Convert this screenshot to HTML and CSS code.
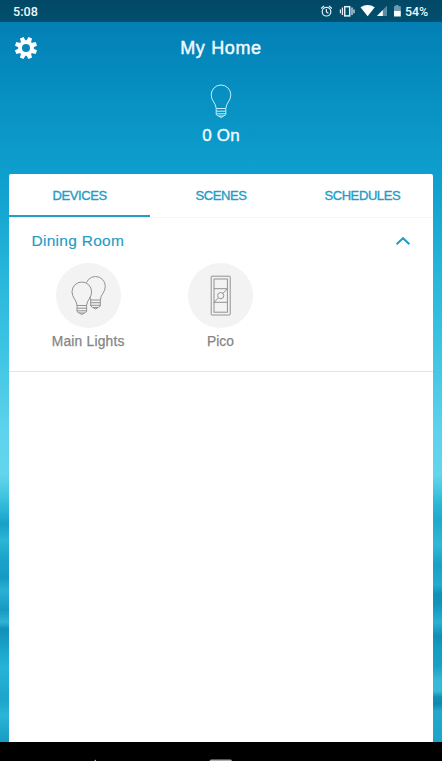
FILE: index.html
```html
<!DOCTYPE html>
<html lang="en">
<head>
<meta charset="utf-8">
<title>My Home</title>
<link rel="stylesheet" href="styles.css">
</head>
<body>
<svg class="defs" width="0" height="0" aria-hidden="true">
  <symbol id="bulb" viewBox="0 0 22 35">
    <path d="M6.2 24.5C6 19 1.2 17 1.2 10.8a9.8 9.8 0 0 1 19.6 0C20.8 17 16 19 15.8 24.5Z M6.2 24.5v6l2 1.5h5.6l2-1.5v-6M6.2 27.2h9.6M6.2 29.8h9.6M8.5 32q2.5 3 5 0"/>
  </symbol>
</svg>
<div class="phone">
  <div class="status">
    <span class="time">5:08</span>
    <svg class="status-icons" width="84" height="22" viewBox="320 0 84 22">
      <g fill="none" stroke="#e4f0f5" stroke-width="1.2">
        <circle cx="326.5" cy="11.7" r="4.3"/>
        <path d="M326.4 9v3l2 1.3M321.2 8.5l2.8-2.5M331.8 8.5L329 6"/>
        <rect x="344.7" y="6.7" width="5" height="9.2" stroke-width="1.5"/>
        <path d="M342.4 7.5v7.5M352 7.5V15M340.4 9.5v3.7M354 9.5v3.7"/>
      </g>
      <path d="M360.5 7.2Q367.5 2.8 374.8 7.2L367.6 16.3Z" fill="#fff"/>
      <path d="M387 5.8V16H377Z" fill="#5c8ca3"/>
      <path d="M382.8 10V16H377Z" fill="#fff"/>
      <path d="M394 6.2h1.5V5h3v1.2h2.3v4.6H394Z" fill="#6f9aad"/>
      <path d="M394 10.8h6.8v5.7H394Z" fill="#fff"/>
    </svg>
    <span class="battery">54%</span>
  </div>
  <header class="header">
    <svg class="gear" width="24" height="24" viewBox="-12 -12 24 24">
      <g fill="#fff">
        <path id="teeth" d="M-2.4-7L-1.9-11.2H1.9L2.4-7V7L1.9 11.2H-1.9L-2.4 7Z" transform="rotate(22.5)"/>
        <use href="#teeth" transform="rotate(45)"/>
        <use href="#teeth" transform="rotate(90)"/>
        <use href="#teeth" transform="rotate(135)"/>
        <circle r="7.8"/>
      </g>
      <circle r="4" fill="#0787bd"/>
    </svg>
    <h1 class="title">My Home</h1>
  </header>
  <div class="summary">
    <svg class="summary-bulb" width="22" height="35"><use href="#bulb"/></svg>
    <div class="count">0 On</div>
  </div>
  <main class="card">
    <nav class="tabs">
      <div class="tab active"><span>DEVICES</span></div>
      <div class="tab"><span>SCENES</span></div>
      <div class="tab"><span>SCHEDULES</span></div>
    </nav>
    <section class="room">
      <div class="room-head">
        <h2>Dining Room</h2>
        <svg width="16" height="10" viewBox="0 0 16 10"><path d="M1.6 8.3L8 2.2L14.4 8.3" fill="none" stroke="#239cc6" stroke-width="2"/></svg>
      </div>
      <div class="devices">
        <div class="device">
          <div class="disc">
            <svg class="lights" width="65" height="65" viewBox="0 0 65 65">
              <use href="#bulb" x="28.5" y="12.5" width="22" height="35"/>
              <path class="mask" d="M20.2 42.5C20 35 15.2 33 15.2 28.5a10.3 10 0 0 1 20.6 0C35.8 33 31 35 30.8 42.5V50H20.2Z"/>
              <use href="#bulb" x="14.8" y="18" width="22" height="35"/>
            </svg>
          </div>
          <span class="main-name">Main Lights</span>
        </div>
        <div class="device">
          <div class="disc">
            <svg class="pico" width="65" height="65" viewBox="0 0 65 65">
              <rect x="23.2" y="13.2" width="19" height="38.8" rx=".7"/>
              <rect x="26" y="16" width="13.4" height="33.2"/>
              <path d="M26 25.7h13.4M26 39.3h13.4M26 39.3l4.4-4.4M35 30.3l4.4-4.6"/>
              <circle cx="32.7" cy="32.6" r="3.1"/>
            </svg>
          </div>
          <span class="pico-name">Pico</span>
        </div>
      </div>
    </section>
  </main>
  <div class="navbar">
    <svg width="442" height="19" viewBox="0 0 442 19"><path d="M94 19l2-1.5v1.5Z" fill="#aaa"/><rect x="209.5" y="17.6" width="22.5" height="8" rx="2" fill="#aaa"/></svg>
  </div>
</div>
</body>
</html>
```
FILE: styles.css
```css
* { box-sizing: border-box; }
body { margin: 0; font-family: "Liberation Sans", Arial, sans-serif; }
svg { display: block; fill: none; }
.defs { position: absolute; }
.phone {
  width: 442px; height: 761px; overflow: hidden;
  display: flex; flex-direction: column;
  background:
    linear-gradient(#0380b5 22px, #058abe 70px, #0c9bcb 150px, #12a3d0 200px, #26b5da 270px, #3dc4e3 350px, #5ed2ec 430px, #63d5ed 475px, #42c5e0 492px, #2ab5d6 505px, #20a9cd 520px, #31b7d6 545px, #1aa0c7 565px, #23abd0 585px, #1191ba 594px, #0e92bc 603px, #1c9fc7 612px, #29b1d3 622px, #118db7 636px, #159dc5 650px, #1a9fc6 666px, #34b9d7 680px, #36bad8 691px, #138eb6 697px, #0e88b0 704px, #23a8cc 711px, #1ca4ca 742px) right 0 top 0 / 221px 761px no-repeat,
    linear-gradient(#0380b5 22px, #058abe 70px, #0c9bcb 150px, #12a3d0 200px, #26b5da 270px, #3dc4e3 350px, #5ed2ec 430px, #63d5ed 475px, #42c5e0 495px, #29b2d4 512px, #189fc7 524px, #2db5d5 540px, #1ba2ca 560px, #159ac4 578px, #2bb0d3 590px, #1799c2 610px, #31b3d4 622px, #128fb8 629px, #1ba5cc 650px, #26b4d6 668px, #1ca4cb 700px, #2cb5d6 715px, #179cc5 742px);
}
.status {
  height: 22px; flex: none; display: flex; align-items: center;
  padding: 0 12px 0 13px; background: linear-gradient(#014866, #024f6e);
  color: #edf7fb; font: 500 12.6px Roboto, sans-serif;
}
.time { width: 307px; }
.battery { margin-left: 1px; font-size: 12.4px; }
.header { height: 52px; flex: none; display: grid; grid-template-columns: 14px 24px 1fr 38px; align-items: center; }
.gear { grid-column: 2; }
.title {
  grid-column: 3; justify-self: center; margin: 0; color: #f2fbff;
  font-size: 18px; font-weight: 400; letter-spacing: .65px; line-height: 20px; -webkit-text-stroke: .45px;
}
.summary { height: 100px; flex: none; padding-top: 10px; display: flex; flex-direction: column; align-items: center; }
.summary-bulb { stroke: #c5eef8; stroke-width: 1; }
.count { margin-top: 7px; color: #f2fbff; font-size: 17px; line-height: 20px; letter-spacing: .2px; -webkit-text-stroke: .4px; }
.card { height: 568px; flex: none; margin: 0 9px; background: #fff; border-radius: 2px 2px 0 0; }
.tabs { height: 44px; display: grid; grid-template-columns: repeat(3, 1fr); border-bottom: 1px solid #f3f5f6; }
.tab {
  height: 43px; display: flex; align-items: center; justify-content: center;
  color: #239cc6; font-size: 13px; letter-spacing: -.4px; -webkit-text-stroke: .35px; border-bottom: 2px solid transparent;
}
.tab.active { border-bottom-color: #239cc6; }
.tab span { padding-top: 2px; }
.room { height: 154px; border-bottom: 1px solid #e4e4e4; }
.room-head { height: 45px; padding: 0 22px 0 22.5px; display: flex; align-items: center; justify-content: space-between; }
.room h2 { margin: 0; color: #239cc6; font-size: 15.5px; font-weight: 400; letter-spacing: .28px; -webkit-text-stroke: .15px; }
.devices { display: flex; padding-left: 13px; }
.device { width: 132.3px; display: flex; flex-direction: column; align-items: center; color: #858585; font-size: 13.8px; line-height: 18px; -webkit-text-stroke: .25px; }
.disc { width: 65px; height: 65px; border-radius: 50%; background: #f3f3f3; margin-bottom: 5px; }
.lights, .pico { stroke: #929292; stroke-width: 1; }
.mask { fill: #f3f3f3; stroke: none; }
.main-name { letter-spacing: .2px; }
.pico-name { letter-spacing: 0; }
.navbar { height: 19px; flex: none; background: #000; }
```
